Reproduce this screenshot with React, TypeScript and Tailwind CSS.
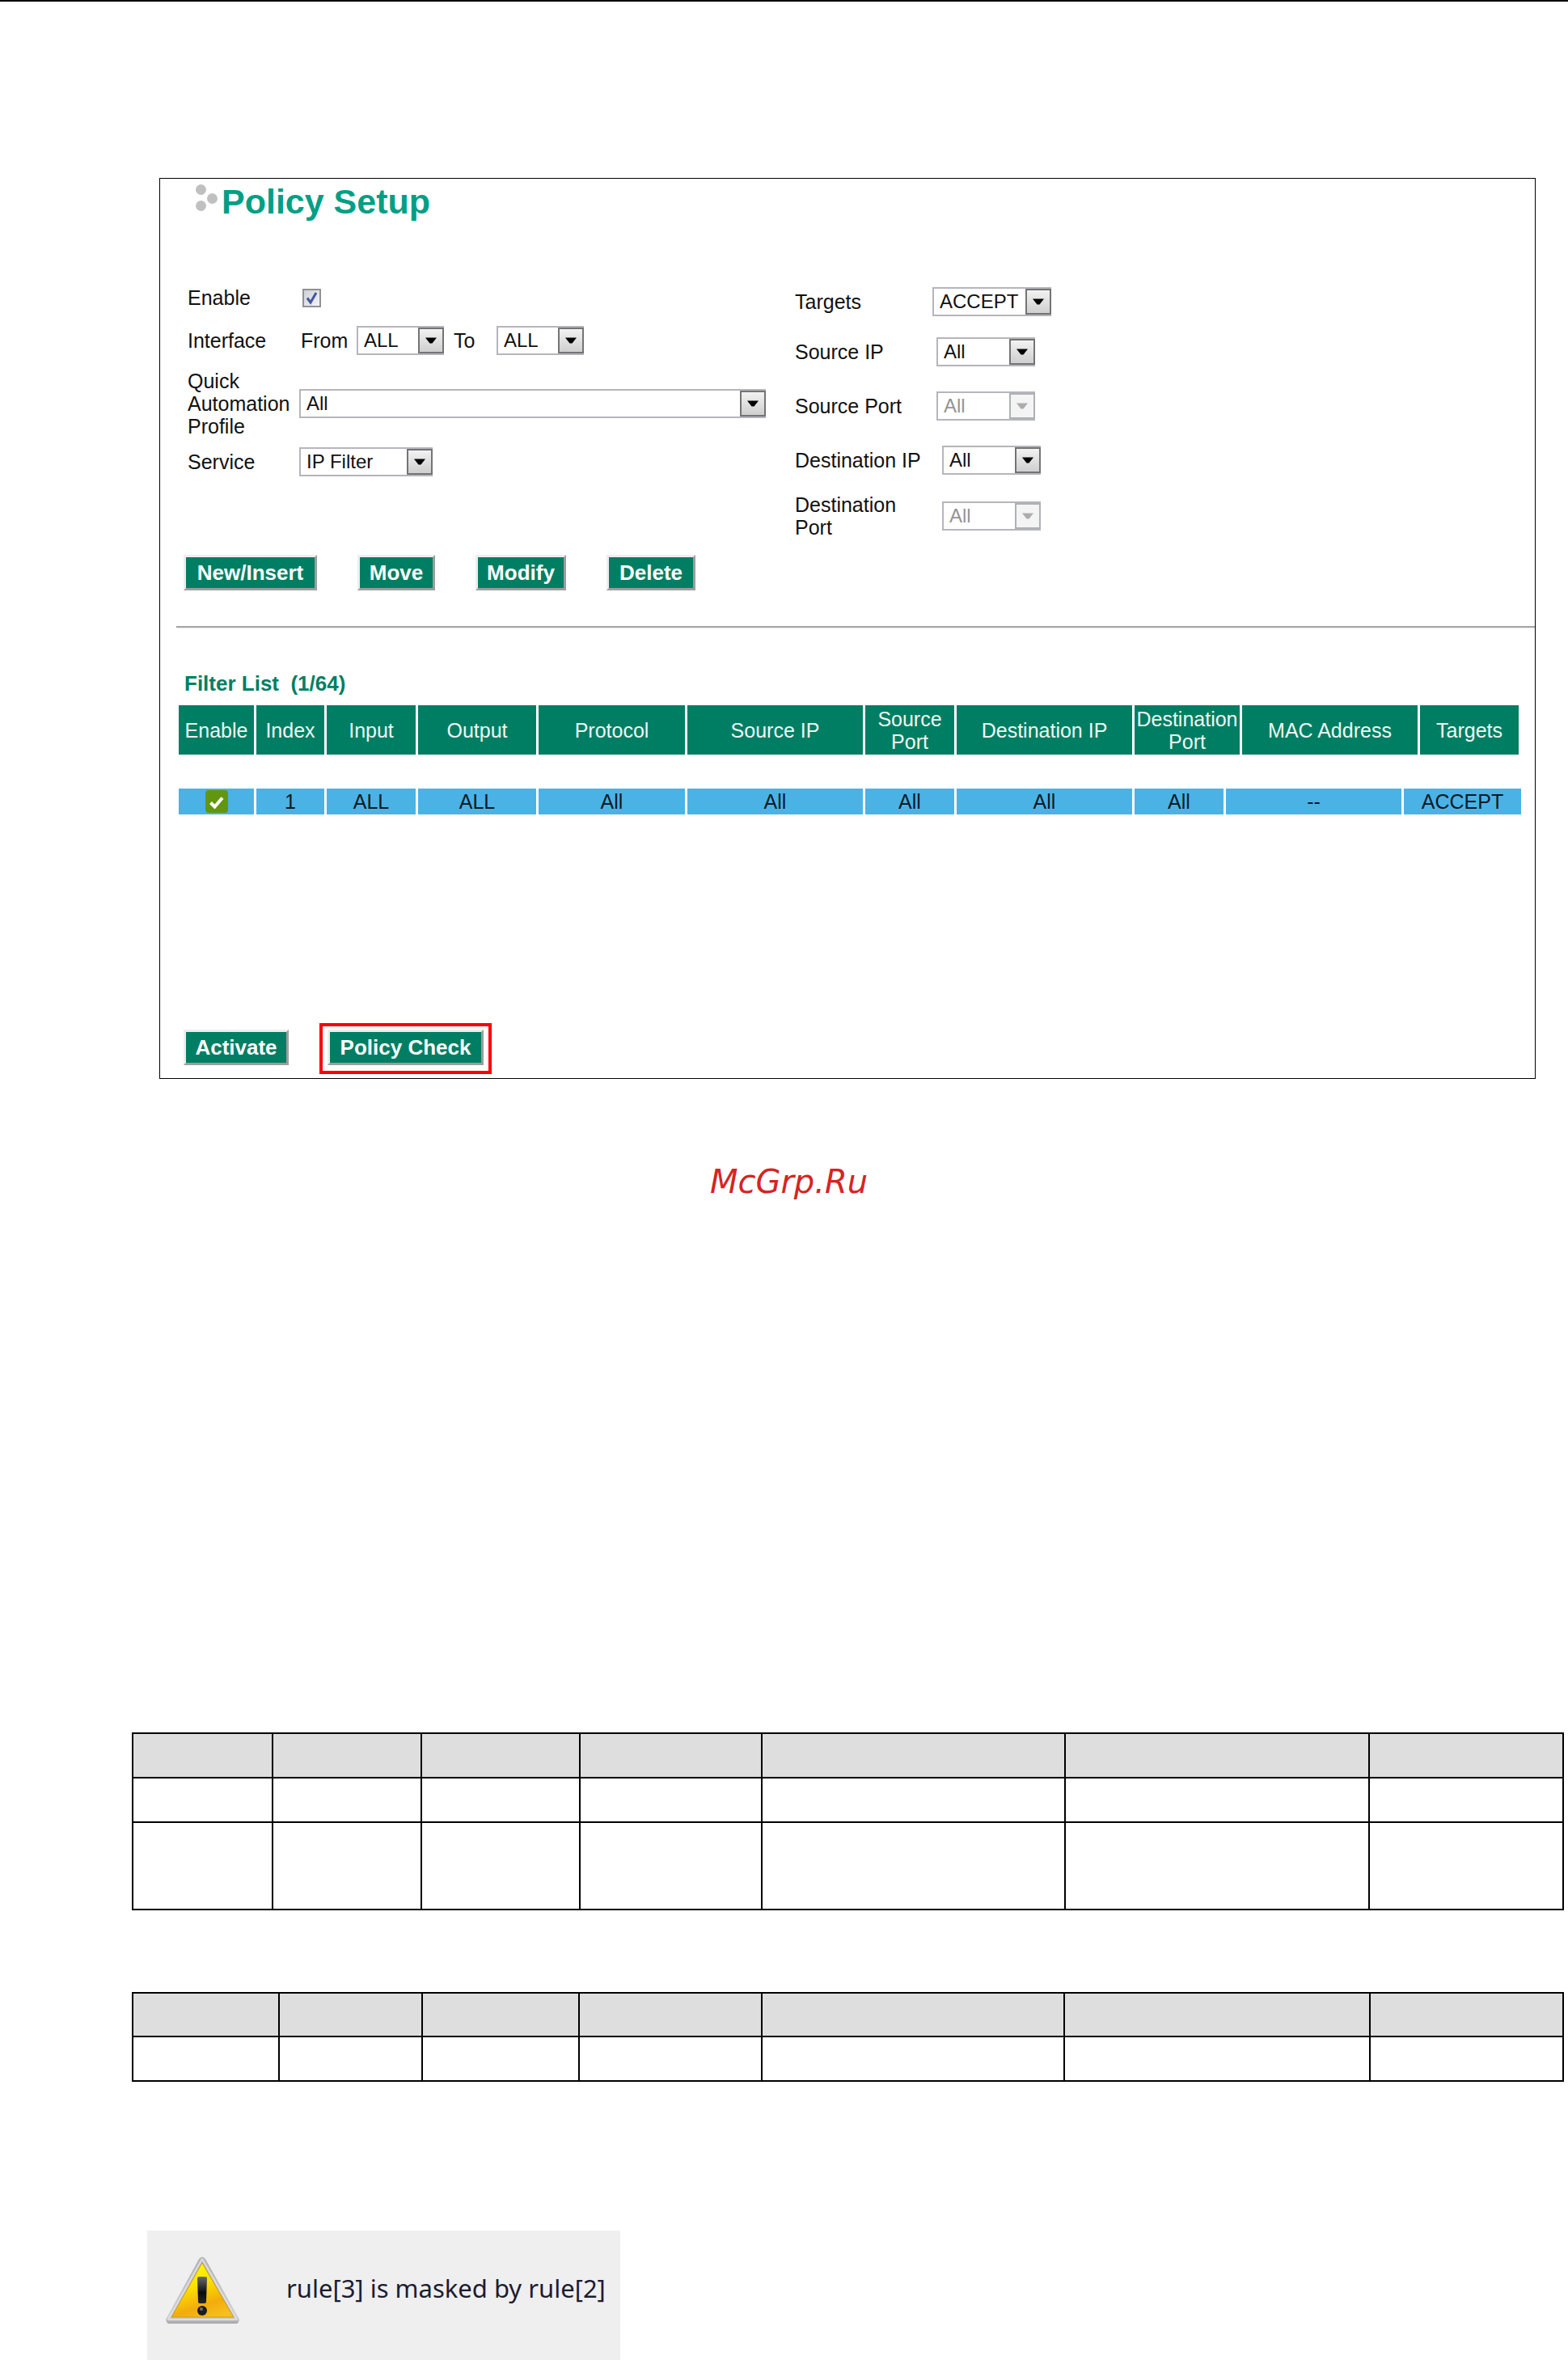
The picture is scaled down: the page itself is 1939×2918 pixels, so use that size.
import clsx from 'clsx'

type SelectProps = {
  id: string
  label?: string
  value: string
  className: string
  disabled?: boolean
}

function Select({ id, label, value, className, disabled }: SelectProps) {
  return (
    <div className={clsx('relative h-9 shrink-0', className)}>
      <select
        id={id}
        aria-label={label}
        disabled={disabled}
        className="block h-full w-full appearance-none border-2 border-[#b5b5bd] bg-white pl-[7px] text-2xl leading-7 text-[#111111] disabled:text-[#949494] disabled:opacity-100"
      >
        <option>{value}</option>
      </select>
      <span
        className={clsx(
          'pointer-events-none absolute top-[2px] right-0 flex h-8 w-8 items-center justify-center border-2 bg-linear-to-b',
          disabled ? 'border-[#adb2b5] from-[#f4f4f4] to-[#f4f4f4]' : 'border-[#747474] from-[#f2f2f2] to-[#cfcfcf]'
        )}
      >
        <svg width="14" height="8" viewBox="0 0 14 8" aria-hidden="true">
          <path d="M0 0.5H14L8.5 7.5H5.5Z" fill={disabled ? '#adadad' : '#000000'} />
        </svg>
      </span>
    </div>
  )
}

function Button({ children, className }: { children: string; className: string }) {
  return (
    <button
      type="button"
      className={clsx(
        'h-11 shrink-0 border-3 border-t-[#eeeeee] border-r-[#9d9d9d] border-b-[#9d9d9d] border-l-[#eeeeee] bg-[#007e63] text-center text-[26px] leading-8 font-bold whitespace-nowrap text-white',
        className
      )}
    >
      {children}
    </button>
  )
}

function WarningIcon() {
  return (
    <svg width="93" height="84" viewBox="0 0 93 84" aria-hidden="true" className="shrink-0">
      <defs>
        <linearGradient id="warn-fill" x1="0.3" y1="0" x2="0.7" y2="1">
          <stop offset="0" stopColor="#ffff00" />
          <stop offset="0.4" stopColor="#fde000" />
          <stop offset="0.75" stopColor="#f2ac0c" />
          <stop offset="1" stopColor="#f7bf1c" />
        </linearGradient>
        <linearGradient id="warn-edge" x1="0" y1="0" x2="0" y2="1">
          <stop offset="0" stopColor="#b4b4b8" />
          <stop offset="0.9" stopColor="#cfcfd2" />
          <stop offset="1" stopColor="#a5a5a8" />
        </linearGradient>
        <linearGradient id="warn-mark" x1="0" y1="0" x2="0" y2="1">
          <stop offset="0" stopColor="#6c6c70" />
          <stop offset="0.6" stopColor="#0c0c10" />
          <stop offset="1" stopColor="#26262c" />
        </linearGradient>
      </defs>
      <path d="M4 83Q0 81 2 76L42 3Q46 -2 50 3L91 76Q93 81 89 83Z" fill="url(#warn-edge)" />
      <path d="M4 78L46 3L89 78Z" fill="none" stroke="#dddde0" strokeWidth="2" strokeLinejoin="round" />
      <path d="M8 75L46 8L85 75Z" fill="url(#warn-fill)" stroke="#c99a1c" strokeWidth="1" />
      <path d="M40 27Q40 25 42 25H50Q52 25 52 27L51 56Q51 58 49 58H43Q41 58 41 56Z" fill="url(#warn-mark)" />
      <circle cx="46" cy="67" r="6" fill="#1b1b20" />
      <circle cx="45" cy="65" r="2" fill="#6d7078" />
    </svg>
  )
}

const headers = [
  { name: 'Enable', span: 1 },
  { name: 'Index', span: 1 },
  { name: 'Input', span: 1 },
  { name: 'Output', span: 1 },
  { name: 'Protocol', span: 1 },
  { name: 'Source IP', span: 1 },
  { name: 'Source Port', span: 1 },
  { name: 'Destination IP', span: 1 },
  { name: 'Destination Port', span: 2 },
  { name: 'MAC Address', span: 2 },
  { name: 'Targets', span: 1 },
]

const rule = [
  { value: '1', span: 1 },
  { value: 'ALL', span: 1 },
  { value: 'ALL', span: 1 },
  { value: 'All', span: 1 },
  { value: 'All', span: 1 },
  { value: 'All', span: 1 },
  { value: 'All', span: 1 },
  { value: 'All', span: 1 },
  { value: '--', span: 2 },
  { value: 'ACCEPT', span: 2 },
]

function FilterTable() {
  return (
    <table className="w-full table-fixed border-separate border-spacing-0 text-center text-[25px] leading-7">
      {/* The rule row ends on narrower port columns than the header does */}
      <colgroup>
        <col className="w-24" />
        <col className="w-[87px]" />
        <col className="w-[113px]" />
        <col className="w-[149px]" />
        <col className="w-[184px]" />
        <col className="w-[220px]" />
        <col className="w-[113px]" />
        <col className="w-[220px]" />
        <col className="w-[113px]" />
        <col className="w-5" />
        <col className="w-[200px]" />
        <col className="w-5" />
        <col />
      </colgroup>
      <thead>
        <tr className="h-[61px]">
          {headers.map((h) => (
            <th
              key={h.name}
              colSpan={h.span}
              className="border-r-3 border-white bg-[#007e63] p-0 font-normal text-[#eef8f4]"
            >
              {h.name}
            </th>
          ))}
        </tr>
      </thead>
      <tbody>
        <tr className="h-[42px]">
          <td colSpan={13} className="p-0" />
        </tr>
        <tr className="h-8">
          <td className="border-r-3 border-white bg-[#4bb2e6] p-0">
            <svg width="28" height="28" viewBox="0 0 28 28" role="img" aria-label="Enabled" className="mx-auto block">
              <rect width="28" height="28" rx="4" fill="#629611" />
              <path d="M6.500 15.500L11.500 20.500L21 9.500" fill="none" stroke="#ffffff" strokeWidth="4" />
            </svg>
          </td>
          {rule.map((cell, i) => (
            <td
              key={i}
              colSpan={cell.span}
              className="border-r-3 border-white bg-[#4bb2e6] p-0 text-[#0b1a24] last:border-r-0"
            >
              {cell.value}
            </td>
          ))}
        </tr>
      </tbody>
    </table>
  )
}

const cellBorder = 'border-2 border-black p-0'

export default function App() {
  return (
    <div className="border-t-2 border-black bg-white font-['Liberation_Sans',Arial,sans-serif] text-[#111111]">
      <main>
        {/* Policy setup panel */}
        <section className="mt-[218px] mr-10 ml-[197px] border border-black pt-1 pb-[5px]">
          <div className="flex items-center gap-1 pl-11">
            <svg width="28" height="34" viewBox="0 0 28 34" aria-hidden="true" className="mb-2">
              <circle cx="6.500" cy="6.500" r="6.500" fill="#c0c0c0" />
              <circle cx="20.500" cy="17.500" r="6.500" fill="#c0c0c0" />
              <circle cx="6.500" cy="26.500" r="6.500" fill="#c0c0c0" />
            </svg>
            <h1 className="text-[43px] leading-[48px] font-bold text-[#009f85]">Policy Setup</h1>
          </div>

          <form className="mt-[77px] grid grid-cols-[751px_1fr] pl-[34px] text-[25px] leading-7">
            <div>
              <div className="flex h-9 items-center">
                <label htmlFor="enable" className="w-[142px]">Enable</label>
                <div className="relative h-[23px] w-[23px]">
                  <input
                    id="enable"
                    type="checkbox"
                    defaultChecked
                    className="peer block h-full w-full appearance-none border-2 border-[#929292] bg-linear-to-br from-[#cdd1d8] to-[#f4f4f6]"
                  />
                  <svg
                    width="23"
                    height="23"
                    viewBox="0 0 23 23"
                    aria-hidden="true"
                    className="pointer-events-none absolute inset-0 hidden peer-checked:block"
                  >
                    <path d="M6 11.500L10 17L17 5" fill="none" stroke="#42589f" strokeWidth="3" />
                  </svg>
                </div>
              </div>
              <div className="mt-[17px] flex h-9 items-center">
                <span className="w-[140px]">Interface</span>
                <label htmlFor="from" className="w-[69px]">From</label>
                <Select id="from" value="ALL" className="w-[108px]" />
                <label htmlFor="to" className="w-[65px] pl-3">To</label>
                <Select id="to" value="ALL" className="w-[108px]" />
              </div>
              <div className="mt-[18px] flex items-center">
                <label htmlFor="profile" className="w-[138px] shrink-0">
                  Quick
                  <br />
                  Automation
                  <br />
                  Profile
                </label>
                <Select id="profile" value="All" className="w-[577px]" />
              </div>
              <div className="mt-3 flex h-9 items-center">
                <label htmlFor="service" className="w-[138px]">Service</label>
                <Select id="service" value="IP Filter" className="w-[165px]" />
              </div>
            </div>

            <div className="pt-[5px]">
              <div className="flex h-9 items-center">
                <label htmlFor="targets" className="w-[170px]">Targets</label>
                <Select id="targets" value="ACCEPT" className="w-[147px]" />
              </div>
              <div className="mt-[26px] flex h-9 items-center">
                <label htmlFor="source-ip" className="w-[175px]">Source IP</label>
                <Select id="source-ip" value="All" className="w-[122px]" />
              </div>
              <div className="mt-[31px] flex h-9 items-center">
                <label htmlFor="source-port" className="w-[175px]">Source Port</label>
                <Select id="source-port" value="All" className="w-[122px]" disabled />
              </div>
              <div className="mt-[31px] flex h-9 items-center">
                <label htmlFor="destination-ip" className="w-[182px]">Destination IP</label>
                <Select id="destination-ip" value="All" className="w-[122px]" />
              </div>
              <div className="mt-[23px] flex items-center">
                <label htmlFor="destination-port" className="w-[182px]">
                  Destination
                  <br />
                  Port
                </label>
                <Select id="destination-port" value="All" className="w-[122px]" disabled />
              </div>
            </div>
          </form>

          <div className="mt-5 flex gap-[50px] pl-[29px]">
            <Button className="w-[165px]">New/Insert</Button>
            <Button className="w-24">Move</Button>
            <Button className="w-28">Modify</Button>
            <Button className="w-[110px]">Delete</Button>
          </div>

          <hr className="mt-11 ml-5 h-[3px] border-t-2 border-b border-t-[#a6a6a6] border-b-[#e6e6e6]" />

          <h2 className="mt-[52px] pl-[30px] text-[26px] leading-8 font-bold text-[#007e63]">
            Filter List&nbsp; (1/64)
          </h2>
          <div className="mt-[11px] mr-[17px] ml-[23px]">
            <FilterTable />
          </div>

          <div className="mt-[258px] flex items-start gap-[38px] pl-[29px]">
            <div className="pt-2">
              <Button className="w-[130px]">Activate</Button>
            </div>
            <div className="flex border-4 border-[#ff0000] px-[6px] pt-1 pb-[7px]">
              <Button className="w-[193px]">Policy Check</Button>
            </div>
          </div>
        </section>

        <p className="mt-[103px] pl-3 text-center font-['DejaVu_Sans',sans-serif] text-[40px] leading-[48px] text-[#d52424] italic">
          McGrp.Ru
        </p>

        {/* Blank rule tables */}
        <div className="mt-[657px] mr-[5px] ml-[163px]">
          <table aria-label="Policy rules" className="w-full table-fixed border-collapse">
            <colgroup>
              <col className="w-[173px]" />
              <col className="w-[184px]" />
              <col className="w-[196px]" />
              <col className="w-[225px]" />
              <col className="w-[375px]" />
              <col className="w-[376px]" />
              <col className="w-[240px]" />
            </colgroup>
            <thead>
              <tr className="h-[55px] bg-[#dedede]">
                {[...Array(7)].map((_, i) => <th key={i} className={cellBorder} />)}
              </tr>
            </thead>
            <tbody>
              <tr className="h-[55px]">
                {[...Array(7)].map((_, i) => <td key={i} className={cellBorder} />)}
              </tr>
              <tr className="h-[108px]">
                {[...Array(7)].map((_, i) => <td key={i} className={cellBorder} />)}
              </tr>
            </tbody>
          </table>

          <table aria-label="Masked rule" className="mt-[101px] w-full table-fixed border-collapse">
            <colgroup>
              <col className="w-[181px]" />
              <col className="w-[177px]" />
              <col className="w-[194px]" />
              <col className="w-[226px]" />
              <col className="w-[374px]" />
              <col className="w-[378px]" />
              <col className="w-[239px]" />
            </colgroup>
            <thead>
              <tr className="h-[54px] bg-[#dedede]">
                {[...Array(7)].map((_, i) => <th key={i} className={cellBorder} />)}
              </tr>
            </thead>
            <tbody>
              <tr className="h-[55px]">
                {[...Array(7)].map((_, i) => <td key={i} className={cellBorder} />)}
              </tr>
            </tbody>
          </table>
        </div>

        {/* Warning message */}
        <div
          role="alert"
          className="mt-[184px] ml-[182px] flex w-[585px] items-start gap-[57px] bg-[#efefef] pt-8 pb-11 pl-[22px]"
        >
          <WarningIcon />
          <p className="pt-[19px] font-['Noto_Sans',sans-serif] text-[31px] leading-10 whitespace-nowrap text-[#1c1c30]">
            rule[3] is masked by rule[2]
          </p>
        </div>
      </main>
    </div>
  )
}
